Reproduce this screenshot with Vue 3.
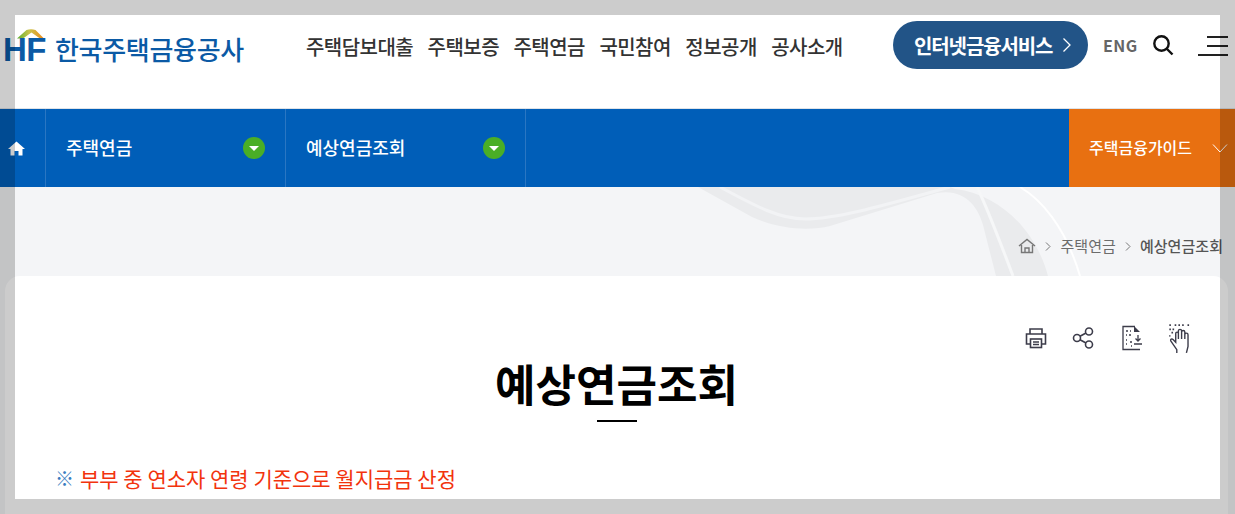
<script setup>
const menus = ['주택담보대출', '주택보증', '주택연금', '국민참여', '정보공개', '공사소개']
const crumbs = ['주택연금', '예상연금조회']
</script>

<template>
    <div class="page">
        <header class="top">
            <a class="logo">
                <span class="mark">
                    <svg class="roof" width="28" height="10" viewBox="0 0 28 10">
                        <defs>
                            <linearGradient id="roofGrad" x1="0" x2="1" y1="0" y2="0">
                                <stop offset="0" stop-color="#5bb031" />
                                <stop offset="0.45" stop-color="#c9c34a" />
                                <stop offset="1" stop-color="#ee8a1c" />
                            </linearGradient>
                        </defs>
                        <path d="M0 9.500 L9.500 1 Q14 -0.500 18.500 1 L27 9.500 L23 9.500 L14.500 3.500 L6 9.500 Z" fill="url(#roofGrad)" />
                    </svg>
                    <span class="hf">HF</span>
                </span>
                <span class="logo_name">한국주택금융공사</span>
            </a>
            <nav class="gnb">
                <a v-for="m in menus" :key="m">{{ m }}</a>
            </nav>
            <a class="service">인터넷금융서비스
                <svg width="10" height="16" viewBox="0 0 10 16"><path d="M1.500 1.500 L8 8 L1.500 14.500" fill="none" stroke="#fff" stroke-width="1.300" /></svg>
            </a>
            <a class="eng">ENG</a>
            <svg class="search" width="22" height="22" viewBox="0 0 22 22">
                <circle cx="9.500" cy="9.500" r="7.200" fill="none" stroke="#111" stroke-width="2.400" />
                <path d="M14.500 14.500 L20.500 20.500" stroke="#111" stroke-width="2.400" />
            </svg>
            <div class="burger">
                <i class="b1"></i><i class="b2"></i><i class="b3"></i>
            </div>
        </header>

        <div class="bar">
            <a class="home">
                <svg width="17" height="15" viewBox="0 0 17 15">
                    <path d="M8.500 0.500 L17 8 L14.500 8 L14.500 14.500 L10.500 14.500 L10.500 10 L6.500 10 L6.500 14.500 L2.500 14.500 L2.500 8 L0 8 Z" fill="#fff" />
                </svg>
            </a>
            <div class="depth" v-for="c in crumbs" :key="c">
                <span>{{ c }}</span>
                <em class="arrow"></em>
            </div>
            <div class="guide">
                <span>주택금융가이드</span>
                <svg width="16" height="9" viewBox="0 0 16 9"><path d="M1 0.500 L8 8 L15 0.500" fill="none" stroke="#fff" stroke-width="1" /></svg>
            </div>
        </div>

        <div class="visual">
            <svg class="swoosh" width="535" height="89" viewBox="0 0 535 89">
                <path d="M18 0 L72 30 C100 43 130 44 150 39 L257 6 C285 1 298 20 303 38 L316 89 L368 89 C358 50 325 8 275 2 L270 0 Z" fill="#eaebed" />
                <path d="M40 0 C77 20 100 32 125 32 C160 32 215 15 270 0" fill="none" stroke="#f2f3f5" stroke-width="3" />
                <path d="M297 0 C303 12 310 28 333 89" fill="none" stroke="#f6f7f8" stroke-width="3" />
                <path d="M340 0 C360 12 385 38 400 89" fill="none" stroke="#fff" stroke-width="2" />
            </svg>
            <div class="crumb">
                <svg width="18" height="16" viewBox="0 0 18 16">
                    <path d="M1 8 L9 1.500 L17 8 M3.500 7 L3.500 14.500 L14.500 14.500 L14.500 7 M7 14.500 L7 10 L11 10 L11 14.500" fill="none" stroke="#777" stroke-width="1.400" />
                </svg>
                <svg class="gt" width="6" height="9" viewBox="0 0 6 9"><path d="M1 0.500 L5 4.500 L1 8.500" fill="none" stroke="#777" /></svg>
                <span>주택연금</span>
                <svg class="gt" width="6" height="9" viewBox="0 0 6 9"><path d="M1 0.500 L5 4.500 L1 8.500" fill="none" stroke="#777" /></svg>
                <strong>예상연금조회</strong>
            </div>
        </div>

        <main class="card">
            <div class="tools">
                <svg width="24" height="24" viewBox="0 0 24 24" fill="none" stroke="#3c3c4a" stroke-width="1.600">
                    <path d="M6 8 L6 3 L18 3 L18 8 M6 18 L2.500 18 L2.500 8 L21.500 8 L21.500 18 L18 18" />
                    <rect x="6.500" y="13" width="11" height="8.500" />
                    <path d="M9 16 L15 16 M9 18.500 L15 18.500" />
                </svg>
                <svg width="24" height="24" viewBox="0 0 24 24" fill="none" stroke="#3c3c4a" stroke-width="1.600">
                    <circle cx="6" cy="12" r="3.500" />
                    <circle cx="18" cy="5.500" r="3.500" />
                    <circle cx="18" cy="18.500" r="3.500" />
                    <path d="M9 10.300 L15 7 M9 13.700 L15 17" />
                </svg>
                <svg class="t_doc" width="24" height="26" viewBox="0 0 24 26" fill="none" stroke="#3c3c4a" stroke-width="1.300">
                    <path d="M15 1.500 L3 1.500 L3 24.500 L20 24.500" />
                    <path d="M14 1 L20 7 L14 7 Z" fill="#3c3c4a" stroke="none" />
                    <path d="M6 6 h2 M10 6 h1 M6 10 h1 M9 10 h2 M6 15 h1 M10 17 h2 M6 19 h1 M11 21 h1" stroke-width="1.600" />
                    <path d="M18 10 L18 16 M15.500 13.500 L18 16 L20.500 13.500 M14 19 L22 19" />
                </svg>
                <svg width="26" height="31" viewBox="0 0 24 29" fill="none" stroke="#3c3c4a" stroke-width="1.300">
                    <path d="M2 2 h1.500 M7 2 h1.500 M10.500 2 h1.500 M14 2 h1.500 M19 2 h1.500 M2 6 h1.500 M5 6 h1.500 M4 9 h1.500 M2 12 h1" stroke-width="1.600" />
                    <path d="M9 28 L9 25 L3.500 17 C2.500 15 4.500 14.500 5.500 15.500 L8 18 L8 10 C8 8 10.500 8 10.500 10 L10.500 15 L10.500 7.500 C10.500 5.500 13.500 5.500 13.500 7.500 L13.500 15 L13.500 8.500 C13.500 6.500 16.500 6.500 16.500 8.500 L16.500 15 L16.500 11 C16.500 9 19.500 9 19.500 11 L19.500 22 L18 28" />
                </svg>
            </div>
            <h1 class="title">예상연금조회</h1>
            <p class="note"><span class="mark_ref">※</span><span class="note_text">부부 중 연소자 연령 기준으로 월지급금 산정</span></p>
        </main>

        <div class="frame"></div>
    </div>
</template>

<style>
html, body {
    margin: 0;
    background: #fff;
}
</style>

<style scoped>
.page {
    position: relative;
    width: 1235px;
    height: 514px;
    overflow: hidden;
    background: #f4f5f7;
    font-family: "Noto Sans CJK KR", "Noto Sans", sans-serif;
}
.frame {
    position: absolute;
    left: 15px;
    top: 15px;
    right: 15px;
    bottom: 15px;
    box-shadow: 0 0 0 60px rgba(0, 0, 0, 0.2);
}
.top {
    display: flex;
    align-items: flex-start;
    height: 108px;
    background: #fff;
    border-bottom: 1px solid #dfe3e8;
}
.logo {
    display: flex;
    margin: 28px 0 0 5px;
    width: 282px;
}
.mark {
    position: relative;
    display: block;
    width: 40px;
    height: 36px;
}
.roof {
    position: absolute;
    left: 12px;
    top: 1px;
}
.hf {
    position: absolute;
    left: -2px;
    top: 4px;
    font: bold 33px/35px "Liberation Sans", sans-serif;
    letter-spacing: -0.5px;
    color: #0b5aa5;
}
.logo_name {
    margin: 2px 0 0 10px;
    font-size: 26px;
    line-height: 38px;
    font-weight: 500;
    letter-spacing: -0.3px;
    color: #0b5aa5;
    white-space: nowrap;
}
.gnb {
    display: flex;
    gap: 14.5px;
    width: 587px;
    margin: 31px 0 0 19px;
    font-size: 20px;
    line-height: 32px;
    font-weight: 500;
    letter-spacing: -0.55px;
    color: #333;
    white-space: nowrap;
}
.service {
    display: flex;
    align-items: center;
    gap: 10px;
    flex: none;
    box-sizing: border-box;
    width: 195px;
    height: 48px;
    margin: 21px 0 0 0;
    padding-left: 21px;
    border-radius: 24px;
    background: #225487;
    color: #fff;
    font-size: 20px;
    font-weight: 700;
    letter-spacing: -1.1px;
    white-space: nowrap;
}
.eng {
    margin: 33px 0 0 15px;
    font-size: 16px;
    line-height: 24px;
    font-weight: 700;
    letter-spacing: 0.5px;
    color: #666;
}
.search {
    margin: 34px 0 0 14px;
}
.burger {
    display: flex;
    flex-direction: column;
    align-items: flex-end;
    gap: 7px;
    margin: 36px 0 0 24px;
    width: 30px;
}
.burger i {
    display: block;
    height: 2px;
    background: #222;
}
.b1 {
    width: 21px;
}
.b2 {
    width: 21px;
}
.b3 {
    width: 30px;
}
.bar {
    display: flex;
    height: 78px;
    background: #005eb8;
}
.home {
    display: flex;
    align-items: center;
    justify-content: center;
    flex: none;
    width: 32px;
    padding-right: 13px;
    border-right: 1px solid #2a76c2;
}
.depth {
    display: flex;
    align-items: center;
    justify-content: space-between;
    box-sizing: border-box;
    width: 240px;
    padding: 0 20px;
    border-right: 1px solid #2a76c2;
    color: #fff;
    font-size: 18px;
    font-weight: 500;
}
.depth span, .guide span {
    margin-bottom: 2px;
}
.arrow {
    position: relative;
    display: block;
    width: 22px;
    height: 22px;
    border-radius: 50%;
    background: #4aae26;
}
.arrow::after {
    content: "";
    position: absolute;
    left: 6px;
    top: 9px;
    border-style: solid;
    border-width: 5px 5px 0;
    border-color: #fff transparent transparent;
}
.guide {
    display: flex;
    align-items: center;
    justify-content: space-between;
    box-sizing: border-box;
    width: 166px;
    margin-left: auto;
    padding: 0 7px 0 20px;
    background: #e87011;
    color: #fff;
    font-size: 16px;
    font-weight: 500;
}
.visual {
    position: relative;
    height: 89px;
    overflow: hidden;
}
.swoosh {
    position: absolute;
    left: 680px;
    top: 0;
}
.crumb {
    position: absolute;
    right: 12px;
    top: 49px;
    display: flex;
    align-items: center;
    gap: 9px;
    font-size: 15px;
    line-height: 20px;
    letter-spacing: 0.05px;
    color: #6c6c6c;
    white-space: nowrap;
}
.crumb strong {
    font-weight: 500;
    color: #555;
}
.card {
    box-sizing: border-box;
    width: 1223px;
    height: 400px;
    margin-left: 5px;
    padding: 46px 50px 0 50px;
    border-radius: 15px 15px 0 0;
    background: #fff;
}
.tools {
    display: flex;
    justify-content: flex-end;
    align-items: center;
    gap: 23px;
    height: 32px;
    margin-right: -15px;
}
.t_doc {
    margin-left: 2px;
}
.title {
    margin: 0;
    text-align: center;
    font-size: 44px;
    line-height: 58px;
    font-weight: 700;
    color: #000;
    padding-bottom: 10px;
}
.title::after {
    content: "";
    display: block;
    width: 40px;
    height: 2px;
    margin: 8px auto 0;
    background: #000;
}
.note {
    display: flex;
    align-items: center;
    gap: 6px;
    margin: 30px 0 0;
    font-size: 21px;
    line-height: 32px;
    color: #f2330d;
    white-space: nowrap;
}
.mark_ref {
    font-size: 19px;
    color: #3a7cc0;
    font-weight: 300;
}
</style>
